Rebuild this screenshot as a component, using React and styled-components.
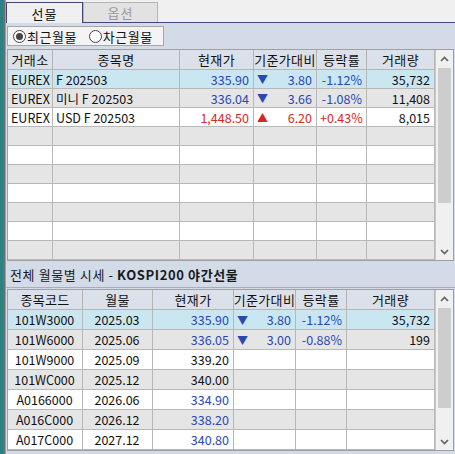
import React from "react";
import styled, { createGlobalStyle } from "styled-components";

const Global = createGlobalStyle`
  html, body { margin: 0; padding: 0; background: #d3dae8; }
  body { font-family: "Noto Sans CJK KR", "Liberation Sans", sans-serif; font-size: 12px; color: #111; }
`;

const Frame = styled.div`
  display: flex;
  width: 455px;
  height: 454px;
  overflow: hidden;
`;

const LeftStrip = styled.div`
  width: 3px;
  background: #2a8282;
  border-right: 2px solid #6a7070;
`;

const Main = styled.div`
  flex: 1;
  display: flex;
  flex-direction: column;
  background: #d3dae8;
  border-left: 1px solid #9aa0a8;
`;

const TabBar = styled.div`
  display: flex;
  align-items: flex-end;
  height: 22px;
  background: #f0f0f0;
  border-bottom: 1px solid #45457a;
  box-sizing: content-box;
`;

const Tab = styled.div`
  width: ${p => p.$w}px;
  box-sizing: border-box;
  display: flex;
  align-items: center;
  justify-content: center;
  font-size: 13px;
  letter-spacing: 1px;
  color: ${p => (p.$active ? "#111" : "#9a9a9a")};
  background: ${p => (p.$active ? "#f0f0f0" : "#e2e2e2")};
  border: 1px solid ${p => (p.$active ? "#45457a" : "#b4b4b4")};
  border-bottom: none;
  margin-bottom: ${p => (p.$active ? "-1px" : "0")};
  height: ${p => (p.$active ? "21px" : "20px")};
`;

const Toolbar = styled.div`
  display: flex;
  padding: 3px 1px 3px 1px;
  height: 20px;
`;

const RadioBox = styled.div`
  display: flex;
  align-items: center;
  gap: 12px;
  width: 157px;
  height: 20px;
  box-sizing: border-box;
  padding-left: 5px;
  background: #f4f4f4;
  border: 1px solid #a6a6a6;
  font-size: 13px;
  letter-spacing: 0.5px;
`;

const RadioItem = styled.span`
  display: flex;
  align-items: center;
  gap: 1px;
`;

const RadioCircle = styled.span`
  width: 11px;
  height: 11px;
  border-radius: 50%;
  border: 1px solid #444;
  background: #fff;
  display: flex;
  align-items: center;
  justify-content: center;
  &::after {
    content: "";
    display: ${p => (p.$on ? "block" : "none")};
    width: 7px;
    height: 7px;
    border-radius: 50%;
    background: #444;
  }
`;

const TableBox = styled.div`
  display: flex;
  margin: 0 1px 0 1px;
  border: 1px solid #a0a0a0;
  background: #fff;
`;

const Grid = styled.div`
  flex: 1;
  display: grid;
  grid-template-columns: ${p => p.$cols};
  grid-auto-rows: ${p => p.$rowH}px;
  grid-template-rows: ${p => p.$headH}px;
`;

const HeadCell = styled.div`
  background: #dbe1ea;
  border-right: 1px solid #b4b4b4;
  border-bottom: 1px solid #b4b4b4;
  display: flex;
  align-items: center;
  justify-content: center;
  font-size: 13px;
  letter-spacing: 0.3px;
  color: #111;
  white-space: nowrap;
  overflow: hidden;
`;

const Cell = styled.div`
  background: ${p => p.$bg};
  border-right: 1px solid #b8b8b8;
  border-bottom: 1px solid #b8b8b8;
  display: flex;
  align-items: center;
  justify-content: ${p => (p.$align === "left" ? "flex-start" : p.$align === "center" ? "center" : "space-between")};
  padding: 0 4px 0 3px;
  color: ${p => p.$color || "#111"};
  font-size: 12.5px;
  white-space: nowrap;
  overflow: hidden;
`;

const Right = styled.span`
  margin-left: auto;
`;

const Tri = styled.span`
  font-size: 11px;
  color: ${p => p.$color};
`;

const ScrollBar = styled.div`
  width: 17px;
  display: flex;
  flex-direction: column;
  background: #f0f0f0;
  border-left: 1px solid #c8c8c8;
`;

const Arrow = styled.div`
  height: ${p => p.$h}px;
  display: flex;
  align-items: center;
  justify-content: center;
`;

const Thumb = styled.div`
  height: ${p => p.$h}px;
  margin: 0 2px;
  background: #cdcdcd;
`;

const Track = styled.div`
  flex: 1;
`;

const Title = styled.div`
  height: 26px;
  display: flex;
  align-items: center;
  padding-left: 4px;
  font-size: 13px;
  letter-spacing: 0.6px;
  color: #1a1a1a;
  border-bottom: 1px solid #a8aeb8;
  margin-bottom: 1px;
  white-space: pre;
  b { font-weight: 700; }
`;

const Chevron = ({ up }) => (
  <svg width="9" height="6" viewBox="0 0 9 6">
    <polyline
      points={up ? "1,5 4.5,1.5 8,5" : "1,1 4.5,4.5 8,1"}
      fill="none"
      stroke="#606060"
      strokeWidth="1.6"
    />
  </svg>
);

const BLUE = "#2a48b2";
const RED = "#d42a1e";
const SEL = "#c9e6f1";
const GRAY = "#e5e5e5";
const WHITE = "#ffffff";

const rowBg = i => (i === 0 ? SEL : i % 2 === 1 ? GRAY : WHITE);

const futures = [
  { ex: "EUREX", name: "F 202503", price: "335.90", dir: "down", diff: "3.80", rate: "-1.12%", vol: "35,732" },
  { ex: "EUREX", name: "미니 F 202503", price: "336.04", dir: "down", diff: "3.66", rate: "-1.08%", vol: "11,408" },
  { ex: "EUREX", name: "USD F 202503", price: "1,448.50", dir: "up", diff: "6.20", rate: "+0.43%", vol: "8,015" },
];

const monthly = [
  { code: "101W3000", m: "2025.03", price: "335.90", pc: BLUE, dir: "down", diff: "3.80", rate: "-1.12%", vol: "35,732" },
  { code: "101W6000", m: "2025.06", price: "336.05", pc: BLUE, dir: "down", diff: "3.00", rate: "-0.88%", vol: "199" },
  { code: "101W9000", m: "2025.09", price: "339.20", pc: "#111" },
  { code: "101WC000", m: "2025.12", price: "340.00", pc: "#111" },
  { code: "A0166000", m: "2026.06", price: "334.90", pc: BLUE },
  { code: "A016C000", m: "2026.12", price: "338.20", pc: BLUE },
  { code: "A017C000", m: "2027.12", price: "340.80", pc: BLUE },
];

const Diff = ({ dir, v }) => {
  if (!dir) return null;
  const c = dir === "up" ? RED : BLUE;
  return (
    <>
      <Tri $color={c}>{dir === "up" ? "▲" : "▼"}</Tri>
      <Right>{v}</Right>
    </>
  );
};

export default function App() {
  const t1cols = "45px 127px 74px 63px 50px 1fr";
  const t2cols = "75px 70px 81px 62px 51px 1fr";
  const empty1 = Array.from({ length: 7 });
  return (
    <>
      <Global />
      <Frame>
        <LeftStrip />
        <Main>
          <TabBar>
            <Tab $w={77} $active>선물</Tab>
            <Tab $w={75}>옵션</Tab>
          </TabBar>
          <Toolbar>
            <RadioBox>
              <RadioItem><RadioCircle $on />최근월물</RadioItem>
              <RadioItem><RadioCircle />차근월물</RadioItem>
            </RadioBox>
          </Toolbar>
          <TableBox>
            <Grid $cols={t1cols} $rowH={19} $headH={20}>
              {["거래소", "종목명", "현재가", "기준가대비", "등락률", "거래량"].map(h => (
                <HeadCell key={h}>{h}</HeadCell>
              ))}
              {futures.map((r, i) => {
                const bg = rowBg(i);
                const c = r.dir === "up" ? RED : BLUE;
                return (
                  <React.Fragment key={i}>
                    <Cell $bg={bg} $align="left">{r.ex}</Cell>
                    <Cell $bg={bg} $align="left">{r.name}</Cell>
                    <Cell $bg={bg} $color={c}><Right>{r.price}</Right></Cell>
                    <Cell $bg={bg} $color={c}><Diff dir={r.dir} v={r.diff} /></Cell>
                    <Cell $bg={bg} $color={c}><Right>{r.rate}</Right></Cell>
                    <Cell $bg={bg}><Right>{r.vol}</Right></Cell>
                  </React.Fragment>
                );
              })}
              {empty1.map((_, j) => {
                const bg = rowBg(j + 3);
                return (
                  <React.Fragment key={"e" + j}>
                    {Array.from({ length: 6 }).map((__, k) => (
                      <Cell key={k} $bg={bg} />
                    ))}
                  </React.Fragment>
                );
              })}
            </Grid>
            <ScrollBar>
              <Arrow $h={18}><Chevron up /></Arrow>
              <Thumb $h={135} />
              <Track />
              <Arrow $h={16}><Chevron /></Arrow>
            </ScrollBar>
          </TableBox>
          <Title>
            전체 월물별 시세 - <b>KOSPI200 야간선물</b>
          </Title>
          <TableBox>
            <Grid $cols={t2cols} $rowH={20} $headH={20}>
              {["종목코드", "월물", "현재가", "기준가대비", "등락률", "거래량"].map(h => (
                <HeadCell key={h}>{h}</HeadCell>
              ))}
              {monthly.map((r, i) => {
                const bg = rowBg(i);
                return (
                  <React.Fragment key={i}>
                    <Cell $bg={bg} $align="center">{r.code}</Cell>
                    <Cell $bg={bg} $align="center">{r.m}</Cell>
                    <Cell $bg={bg} $color={r.pc}><Right>{r.price}</Right></Cell>
                    <Cell $bg={bg} $color={BLUE}><Diff dir={r.dir} v={r.diff} /></Cell>
                    <Cell $bg={bg} $color={BLUE}><Right>{r.rate}</Right></Cell>
                    <Cell $bg={bg}><Right>{r.vol}</Right></Cell>
                  </React.Fragment>
                );
              })}
            </Grid>
            <ScrollBar>
              <Arrow $h={18}><Chevron up /></Arrow>
              <Thumb $h={100} />
              <Track />
              <Arrow $h={16}><Chevron /></Arrow>
            </ScrollBar>
          </TableBox>
        </Main>
      </Frame>
    </>
  );
}
